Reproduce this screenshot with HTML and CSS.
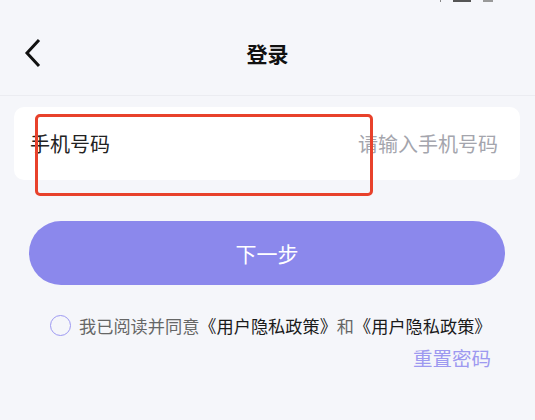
FILE: index.html
```html
<!DOCTYPE html>
<html lang="zh-CN">
<head>
  <meta charset="UTF-8" />
  <title>登录</title>
  <link rel="stylesheet" href="styles.css">
</head>
<body>
  <div class="status-bar">
    <span class="signal"></span>
    <span class="battery"></span>
    <span class="battery-tip"></span>
  </div>

  <nav class="nav-bar">
    <a class="back" href="#">
      <svg width="18" height="30" viewBox="0 0 18 30">
        <polyline points="15,2 3,15 15,28" fill="none" stroke="#111" stroke-width="3" />
      </svg>
    </a>
    <h1>登录</h1>
    <span></span>
  </nav>

  <main class="login">
    <div class="phone-card">
      <label for="phone">手机号码</label>
      <input type="tel" id="phone" placeholder="请输入手机号码" />
      <div class="mark"></div>
    </div>

    <button type="button" class="next-button">下一步</button>

    <div class="agree">
      <span class="radio"></span>
      <p>我已阅读并同意<a href="#">《用户隐私政策》</a>和<a href="#">《用户隐私政策》</a></p>
    </div>

    <div class="reset">
      <a href="#">重置密码</a>
    </div>
  </main>
</body>
</html>
```

FILE: styles.css
```css
body {
  margin: 0;
  padding: 0;
  background-color: #f5f6fa;
  font-family: "Noto Sans CJK SC", "Noto Sans", sans-serif;
  color: #1a1a1a;
}

.status-bar {
  height: 10px;
  display: flex;
  justify-content: flex-end;
  align-items: flex-start;
  gap: 12px;
  padding-right: 42px;
}

.signal {
  width: 1px;
  height: 2px;
  background-color: #888;
}

.battery {
  width: 18px;
  height: 2px;
  background-color: #555;
}

.battery-tip {
  width: 10px;
  height: 2px;
  background-color: #999;
}

.nav-bar {
  height: 85px;
  display: grid;
  grid-template-columns: 1fr auto 1fr;
  align-items: center;
  border-bottom: 1px solid #ebecf1;
}

.nav-bar .back {
  display: flex;
  padding-left: 24px;
}

.nav-bar h1 {
  margin: 0;
  font-size: 21px;
  font-weight: bold;
  color: #111;
}

.login {
  padding: 11px 15px 0 14px;
}

.phone-card {
  position: relative;
  height: 73px;
  display: flex;
  align-items: center;
  background-color: #ffffff;
  border-radius: 10px;
  padding: 0 22px 0 16px;
}

.phone-card label {
  font-size: 20px;
  color: #222;
}

.phone-card input {
  flex: 1;
  min-width: 0;
  border: none;
  outline: none;
  background: transparent;
  text-align: right;
  font-family: inherit;
  font-size: 20px;
  padding: 0;
}

.phone-card input::placeholder {
  color: #a4a5ad;
}

/* highlight frame drawn over the field */
.mark {
  position: absolute;
  left: 21px;
  top: 7px;
  width: 332px;
  height: 76px;
  border: 3px solid #e8412b;
  border-radius: 5px;
}

.next-button {
  display: block;
  width: calc(100% - 30px);
  height: 64px;
  margin: 41px 0 0 15px;
  border: none;
  border-radius: 32px;
  background-color: #8b88ec;
  color: white;
  font-family: inherit;
  font-size: 21px;
}

.agree {
  display: flex;
  align-items: center;
  gap: 8px;
  margin-top: 28px;
  padding-left: 36px;
}

.radio {
  width: 19px;
  height: 19px;
  border: 1.5px solid #9d99f2;
  border-radius: 50%;
}

.agree p {
  margin: 0;
  font-size: 17.2px;
  color: #666;
}

.agree a {
  color: #1a1a1a;
  text-decoration: none;
}

.reset {
  display: flex;
  justify-content: flex-end;
  padding-right: 29px;
  margin-top: 5px;
}

.reset a {
  font-size: 19.5px;
  color: #9d99f0;
  text-decoration: none;
}
```
